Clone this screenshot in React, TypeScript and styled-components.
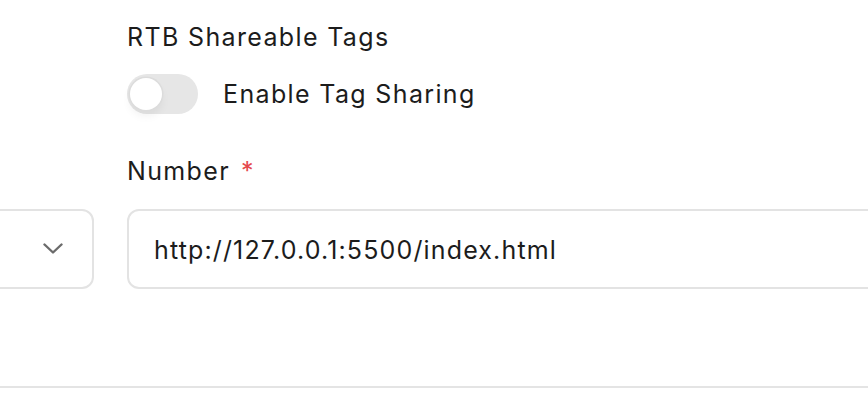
import React from "react";
import styled, { createGlobalStyle } from "styled-components";

const Global = createGlobalStyle`
  html, body { margin: 0; padding: 0; background: #ffffff; }
  body { overflow: hidden; width: 868px; height: 420px; font-family: Inter, "Noto Sans", sans-serif; color: #1c1c1c; }
`;

const Page = styled.div`
  width: 868px;
  height: 420px;
  overflow: hidden;
  display: flex;
  flex-direction: column;
`;

const FormGrid = styled.div`
  display: grid;
  grid-template-columns: 134px 900px;
  column-gap: 33px;
  margin-left: -40px;
  padding-top: 20px;
  align-items: end;
`;

const LeftColumn = styled.div`
  display: flex;
  flex-direction: column;
`;

const RightColumn = styled.div`
  display: flex;
  flex-direction: column;
`;

const SectionTitle = styled.div`
  font-size: 25px;
  letter-spacing: 1.35px;
  line-height: 34px;
  font-weight: 400;
`;

const ToggleRow = styled.label`
  display: flex;
  align-items: center;
  gap: 25px;
  margin-top: 20px;
  font-size: 25px;
  letter-spacing: 1.35px;
  line-height: 40px;
`;

const Track = styled.span<{ $on: boolean }>`
  position: relative;
  width: 71px;
  height: 40px;
  border-radius: 20px;
  background: ${(p) => (p.$on ? "#2f6fed" : "#e6e6e6")};
  flex-shrink: 0;
`;

const Knob = styled.span<{ $on: boolean }>`
  position: absolute;
  top: 4px;
  left: ${(p) => (p.$on ? "35px" : "3px")};
  width: 32px;
  height: 32px;
  border-radius: 50%;
  background: #ffffff;
  box-shadow: 0 0 0 1.5px #dcdcdc, 0 6px 10px rgba(0, 0, 0, 0.06);
`;

const FieldLabel = styled.div`
  margin-top: 40px;
  font-size: 25px;
  letter-spacing: 1.35px;
  line-height: 34px;
  display: flex;
  gap: 11px;
`;

const Required = styled.span`
  color: #e5484d;
`;

const BoxBase = styled.div`
  box-sizing: border-box;
  height: 80px;
  border: 2px solid #e3e3e3;
  border-radius: 12px;
  background: #ffffff;
  display: flex;
  align-items: center;
`;

const SelectBox = styled(BoxBase)`
  justify-content: flex-end;
  padding-right: 29px;
  color: #6b6b6b;
`;

const InputBox = styled(BoxBase)`
  margin-top: 21px;
  padding-left: 25px;
  font-size: 25px;
  letter-spacing: 1.15px;
  color: #1c1c1c;
  padding-top: 2px;
`;

const Divider = styled.div`
  margin-top: 97px;
  height: 2px;
  background: #e4e4e4;
  width: 100%;
`;

const Chevron = () => (
  <svg width="20" height="12" viewBox="0 0 20 12" fill="none">
    <path d="M1.5 1.5l8.5 8 8.5-8" stroke="currentColor" strokeWidth="2.4" strokeLinecap="round" strokeLinejoin="round" />
  </svg>
);

export default function App() {
  const on = false;
  return (
    <Page>
      <Global />
      <FormGrid>
        <LeftColumn>
          <SelectBox>
            <Chevron />
          </SelectBox>
        </LeftColumn>
        <RightColumn>
          <SectionTitle>RTB Shareable Tags</SectionTitle>
          <ToggleRow>
            <Track $on={on}>
              <Knob $on={on} />
            </Track>
            Enable Tag Sharing
          </ToggleRow>
          <FieldLabel>
            Number<Required>*</Required>
          </FieldLabel>
          <InputBox>http://127.0.0.1:5500/index.html</InputBox>
        </RightColumn>
      </FormGrid>
      <Divider />
    </Page>
  );
}
